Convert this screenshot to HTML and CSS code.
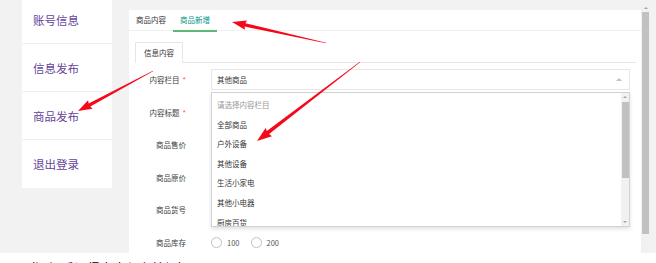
FILE: index.html
```html
<!DOCTYPE html>
<html lang="zh-CN">
<head>
    <meta charset="UTF-8">
    <meta name="viewport" content="width=device-width, initial-scale=1.0">
    <title>商品发布</title>
    <link rel="stylesheet" href="styles.css">
</head>
<body>

<div class="screen">
    <div class="frame">

        <!-- menu de gauche -->
        <nav class="side">
            <a href="#" class="side-item">账号信息</a>
            <a href="#" class="side-item">信息发布</a>
            <a href="#" class="side-item">商品发布</a>
            <a href="#" class="side-item">退出登录</a>
        </nav>

        <div class="panel">
            <ul class="tab-title">
                <li>商品内容</li>
                <li class="this">商品新增</li>
            </ul>

            <div class="tab-body">
                <ul class="card-title">
                    <li class="this">信息内容</li>
                </ul>

                <form class="form">
                    <div class="row">
                        <label class="label">内容栏目<span class="req">*</span></label>
                        <div class="field select">
                            <div class="select-title">其他商品<i class="edge"></i></div>
                            <!-- liste ouverte -->
                            <div class="dropdown">
                                <dl class="options">
                                    <dd class="tips">请选择内容栏目</dd>
                                    <dd>全部商品</dd>
                                    <dd>户外设备</dd>
                                    <dd>其他设备</dd>
                                    <dd>生活小家电</dd>
                                    <dd>其他小电器</dd>
                                    <dd>厨房百货</dd>
                                </dl>
                                <div class="sb">
                                    <i class="up"></i>
                                    <i class="thumb"></i>
                                    <i class="down"></i>
                                </div>
                            </div>
                        </div>
                    </div>
                    <div class="row">
                        <label class="label">内容标题<span class="req">*</span></label>
                        <div class="field"><input class="input" type="text"></div>
                    </div>
                    <div class="row">
                        <label class="label">商品售价</label>
                        <div class="field"><input class="input" type="text"></div>
                    </div>
                    <div class="row">
                        <label class="label">商品原价</label>
                        <div class="field"><input class="input" type="text"></div>
                    </div>
                    <div class="row">
                        <label class="label">商品货号</label>
                        <div class="field"><input class="input" type="text"></div>
                    </div>
                    <div class="row">
                        <label class="label">商品库存</label>
                        <div class="field radios">
                            <span class="radio"><i class="circle"></i>100</span>
                            <span class="radio"><i class="circle"></i>200</span>
                        </div>
                    </div>
                </form>
            </div>
        </div>

        <!-- barre de défilement de la page -->
        <div class="vscroll">
            <i class="up"></i>
            <i class="thumb"></i>
        </div>
    </div>

    <p class="note">（添加后记得点击保存按钮）</p>

    <!-- flèches rouges -->
    <svg class="arrows" width="656" height="263" viewBox="0 0 656 263">
        <g fill="#f5081a">
            <polygon transform="translate(326,43) rotate(192.6)" points="0,-0.2 83,-1.7 82,-4.8 96.3,0 82,4.8 83,1.7 0,0.2"/>
            <polygon transform="translate(153,71) rotate(151.9)" points="0,-0.2 72,-1.7 71,-4.8 85,0 71,4.8 72,1.7 0,0.2"/>
            <polygon transform="translate(360,62) rotate(142.5)" points="0,-0.2 116,-1.9 115,-5.2 129.8,0 115,5.2 116,1.9 0,0.2"/>
        </g>
    </svg>
</div>

</body>
</html>
```

FILE: styles.css
```css
* {
    box-sizing: border-box;
}

body {
    margin: 0;
    background: #fff;
    font-family: "Noto Sans CJK SC", "Noto Sans", sans-serif;
    overflow: hidden;
}

.screen {
    position: relative;
    width: 656px;
    height: 263px;
    overflow: hidden;
}

.frame {
    display: flex;
    height: 253px;
    background: #f2f2f2;
}

/* menu de gauche */
.side {
    margin: -4px 0 0 22px;
    width: 90px;
    height: 192px;
    background: #fff;
    display: flex;
    flex-direction: column;
}

.side-item {
    height: 48px;
    display: flex;
    align-items: center;
    padding-left: 11px;
    border-bottom: 1px solid #efefef;
    font-size: 11.5px;
    color: #65449b;
    text-decoration: none;
}

.side-item:last-child {
    border-bottom: none;
}

/* panneau principal */
.panel {
    flex: 0 0 512px;
    margin: 10px 0 0 17px;
    background: #fff;
}

.tab-title {
    display: flex;
    margin: 0;
    padding: 0;
    list-style: none;
    height: 21px;
    border-bottom: 1px solid #f0f0f0;
}

.tab-title li {
    position: relative;
    padding: 0 7px;
    line-height: 20px;
    font-size: 7.5px;
    color: #333;
}

.tab-title li.this {
    color: #009688;
}

.tab-title li.this::after {
    content: "";
    position: absolute;
    left: 0;
    right: 0;
    bottom: -2px;
    height: 2px;
    background: #5fb878;
}

.tab-body {
    padding: 11px 5px 0 6px;
}

.card-title {
    display: flex;
    margin: 0;
    padding: 0;
    list-style: none;
    height: 21px;
    border-bottom: 1px solid #e6e6e6;
}

.card-title li {
    height: 21px;
    padding: 0 8px;
    line-height: 20px;
    font-size: 7.5px;
    color: #333;
    background: #fff;
    border: 1px solid #e6e6e6;
    border-bottom-color: #fff;
}

/* formulaire */
.form {
    margin-top: 6px;
}

.row {
    display: flex;
    height: 21px;
    margin-bottom: 11.5px;
}

.label {
    width: 51px;
    text-align: right;
    line-height: 21px;
    font-size: 7.5px;
    color: #3d3d3d;
}

.req {
    margin-left: 3px;
    color: #ff5722;
}

.field {
    position: relative;
    width: 419px;
    margin-left: 25px;
}

.input {
    width: 100%;
    height: 21px;
    border: 1px solid #e6e6e6;
}

.select-title {
    position: relative;
    height: 21px;
    padding-left: 5px;
    border: 1px solid #e6e6e6;
    line-height: 19px;
    font-size: 7.5px;
    color: #333;
}

.select-title .edge {
    position: absolute;
    right: 7px;
    top: 8px;
    border-style: solid;
    border-width: 0 3px 3px;
    border-color: transparent transparent #c2c2c2;
}

.dropdown {
    position: absolute;
    top: 23px;
    left: 0;
    width: 100%;
    height: 135px;
    display: flex;
    background: #fff;
    border: 1px solid #d2d2d2;
    box-shadow: 0 2px 4px rgba(0, 0, 0, .12);
    z-index: 5;
}

.options {
    flex: 1;
    margin: 0;
    padding-top: 2px;
    overflow: hidden;
}

.options dd {
    margin: 0;
    padding-left: 5px;
    line-height: 19.6px;
    font-size: 7.5px;
    color: #333;
    white-space: nowrap;
}

.options .tips {
    color: #999;
}

.sb {
    width: 8px;
    display: flex;
    flex-direction: column;
    align-items: center;
    padding: 3px 0;
    background: #f1f1f1;
}

.sb .up,
.vscroll .up {
    border-style: solid;
    border-width: 0 2.5px 2.5px;
    border-color: transparent transparent #a3a3a3;
}

.sb .thumb {
    width: 7px;
    height: 76px;
    margin-top: 4px;
    background: #c1c1c1;
}

.sb .down {
    margin-top: auto;
    border-style: solid;
    border-width: 2.5px 2.5px 0;
    border-color: #a3a3a3 transparent transparent;
}

.radios {
    display: flex;
    align-items: center;
}

.radio {
    display: flex;
    align-items: center;
    margin-right: 11px;
    font-size: 7.5px;
    color: #555;
}

.circle {
    width: 11px;
    height: 11px;
    margin-right: 5px;
    border: 1px solid #c2c2c2;
    border-radius: 50%;
}

/* barre de défilement */
.vscroll {
    flex: 0 0 9px;
    margin-top: 5px;
    display: flex;
    flex-direction: column;
    align-items: center;
    padding-top: 2px;
    background: #f1f1f1;
}

.vscroll .thumb {
    width: 7px;
    height: 222px;
    margin-top: 3px;
    background: #c1c1c1;
}

.note {
    margin: 0;
    padding: 7px 0 0 22px;
    font-size: 13px;
    line-height: 16px;
    color: #000;
}

.arrows {
    position: absolute;
    left: 0;
    top: 0;
    z-index: 10;
    pointer-events: none;
}
```
